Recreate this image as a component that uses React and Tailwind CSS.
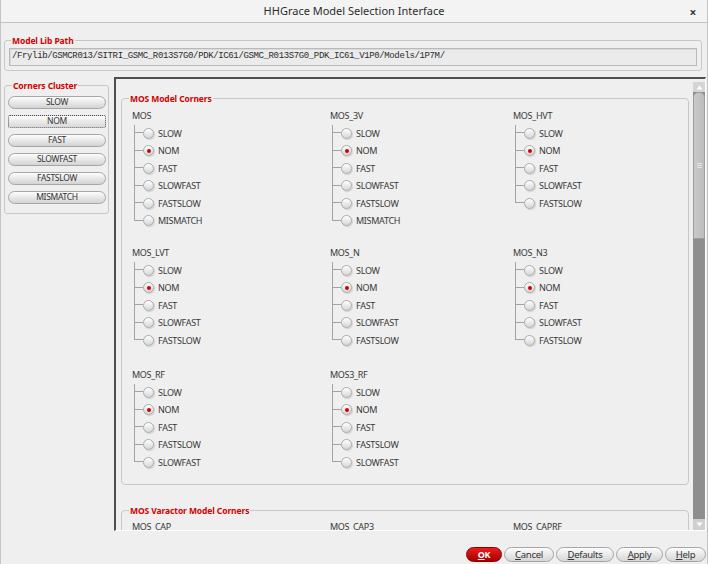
import React from 'react';

const RED = 'text-[#d20000]';

const mosGroups = [
  [
    { name: 'MOS', items: ['SLOW', 'NOM', 'FAST', 'SLOWFAST', 'FASTSLOW', 'MISMATCH'] },
    { name: 'MOS_3V', items: ['SLOW', 'NOM', 'FAST', 'SLOWFAST', 'FASTSLOW', 'MISMATCH'] },
    { name: 'MOS_HVT', items: ['SLOW', 'NOM', 'FAST', 'SLOWFAST', 'FASTSLOW'] },
  ],
  [
    { name: 'MOS_LVT', items: ['SLOW', 'NOM', 'FAST', 'SLOWFAST', 'FASTSLOW'] },
    { name: 'MOS_N', items: ['SLOW', 'NOM', 'FAST', 'SLOWFAST', 'FASTSLOW'] },
    { name: 'MOS_N3', items: ['SLOW', 'NOM', 'FAST', 'SLOWFAST', 'FASTSLOW'] },
  ],
  [
    { name: 'MOS_RF', items: ['SLOW', 'NOM', 'FAST', 'FASTSLOW', 'SLOWFAST'] },
    { name: 'MOS3_RF', items: ['SLOW', 'NOM', 'FAST', 'FASTSLOW', 'SLOWFAST'] },
    null,
  ],
];

const clusterButtons = ['SLOW', 'NOM', 'FAST', 'SLOWFAST', 'FASTSLOW', 'MISMATCH'];

// small radio indicator, red dot when selected
function Radio({ checked }) {
  return (
    <div className="w-[11px] h-[11px] shrink-0 rounded-full border border-[#ababab] bg-gradient-to-b from-white to-[#d6d6d6] shadow-[1px_1px_1px_rgba(0,0,0,0.12)] flex items-center justify-center">
      {checked && <div className="w-[4px] h-[4px] rounded-full bg-[#d40000]" />}
    </div>
  );
}

function TreeItem({ label, last }) {
  return (
    <div className="flex h-[17.5px] items-center">
      <div className="flex flex-col self-stretch w-[9px] ml-[2px]">
        <div className="h-1/2 border-l border-b border-[#a3a3a3]" />
        <div className={last ? 'h-1/2' : 'h-1/2 border-l border-[#a3a3a3]'} />
      </div>
      <Radio checked={label === 'NOM'} />
      <span className="ml-[4px] leading-none">{label}</span>
    </div>
  );
}

function CornerTree({ group }) {
  if (!group) return <div />;
  return (
    <div className="flex flex-col">
      <div className="h-[17.5px] flex items-center leading-none">{group.name}</div>
      {group.items.map((it, i) => (
        <TreeItem key={it} label={it} last={i === group.items.length - 1} />
      ))}
    </div>
  );
}

function Legend({ children, className = '' }) {
  return (
    <legend className={`px-[1px] text-[8.5px] font-bold leading-[11px] tracking-[-0.1px] ${RED} ${className}`}>
      {children}
    </legend>
  );
}

function PillButton({ children, className = '' }) {
  return (
    <button
      className={`h-[13px] rounded-full border border-[#a6a6a6] bg-gradient-to-b from-[#fdfdfd] to-[#d3d3d3] text-[8.5px] leading-none text-[#333] flex items-center justify-center ${className}`}
    >
      {children}
    </button>
  );
}

function DialogButton({ mnemonic, rest, width, primary }) {
  if (primary) {
    return (
      <button className={`${width} h-[15px] rounded-full border border-[#8a0000] bg-gradient-to-b from-[#ec1b1b] to-[#a80000] text-white font-bold text-[9px] leading-none flex items-center justify-center`}>
        <span className="underline">{mnemonic}</span>
        {rest}
      </button>
    );
  }
  return (
    <button className={`${width} h-[15px] rounded-full border border-[#a6a6a6] bg-gradient-to-b from-[#fdfdfd] to-[#d6d6d6] text-[#333] text-[9.5px] leading-none flex items-center justify-center`}>
      <span className="underline">{mnemonic}</span>
      {rest}
    </button>
  );
}

export default function App() {
  return (
    <div className="w-[708px] h-[564px] overflow-hidden bg-[#efefef] border-x border-[#c4c4c4] flex flex-col font-['Noto_Sans','DejaVu_Sans',sans-serif] text-[9px] tracking-[-0.3px] text-[#383838]">
      {/* title bar */}
      <div className="h-[23px] shrink-0 border-b border-[#c2c2c2] bg-[#f3f3f3] flex items-center relative">
        <div className="flex-1 text-center text-[11px] tracking-normal text-[#2e2e2e]">HHGrace Model Selection Interface</div>
        <div className="absolute right-[11px] top-[4px] text-[12px] font-bold text-[#333]">×</div>
      </div>

      {/* model lib path */}
      <fieldset className="mt-[12px] ml-[3px] mr-[5px] border border-[#c8c8c8] rounded-[3px] px-[4px] pb-[4px]">
        <Legend className="ml-[2px]">Model Lib Path</Legend>
        <div className="mt-[2px] h-[18px] border border-[#b9b9b9] bg-[#ebebeb] shadow-[inset_1px_1px_1px_rgba(0,0,0,0.08)] flex items-center pl-[2px] font-['Liberation_Mono',monospace] text-[9px] tracking-[-0.37px] text-[#2a2a2a]">
          /Frylib/GSMCR013/SITRI_GSMC_R013S7G0/PDK/IC61/GSMC_R013S7G0_PDK_IC61_V1P0/Models/1P7M/
        </div>
      </fieldset>

      {/* main area */}
      <div className="mt-[6px] h-[454px] shrink-0 flex">
        {/* corners cluster */}
        <div className="w-[113px] shrink-0">
          <fieldset className="mt-[3px] ml-[3px] w-[105px] border border-[#c8c8c8] rounded-[3px] pl-[3px] pr-[2px] pb-[9px]">
            <Legend className="ml-[4px]">Corners Cluster</Legend>
            <div className="mt-[5px] flex flex-col gap-[6px]">
              {clusterButtons.map((b) =>
                b === 'NOM' ? (
                  <button key={b} className="h-[13px] rounded-[2px] border border-dotted border-[#4a4a4a] bg-gradient-to-b from-[#fdfdfd] to-[#d8d8d8] text-[8.5px] leading-none text-[#333] flex items-center justify-center">
                    {b}
                  </button>
                ) : (
                  <PillButton key={b}>{b}</PillButton>
                )
              )}
            </div>
          </fieldset>
        </div>

        {/* scroll frame */}
        <div className="flex-1 mr-[1px] flex border-t-2 border-l-2 border-[#4f4f4f] border-b border-b-white border-r border-r-white">
          <div className="flex-1 overflow-hidden">
            <fieldset className="mt-[14px] ml-[5px] mr-[4px] border border-[#c8c8c8] rounded-[4px] pl-[10px] pb-[13px]">
              <Legend className="-ml-[3px]">MOS Model Corners</Legend>
              <div className="mt-[3px] grid grid-cols-[198px_183px_1fr] grid-rows-[137px_122px_auto]">
                {mosGroups.flat().map((g, i) => (
                  <CornerTree key={i} group={g} />
                ))}
              </div>
            </fieldset>

            <fieldset className="mt-[20px] ml-[5px] mr-[4px] border border-[#c8c8c8] rounded-[4px] pl-[10px] pb-[15px]">
              <Legend className="-ml-[3px]">MOS Varactor Model Corners</Legend>
              <div className="mt-[2px] grid grid-cols-[198px_183px_1fr]">
                <div className="h-[16px] flex items-center leading-none">MOS_CAP</div>
                <div className="h-[16px] flex items-center leading-none">MOS_CAP3</div>
                <div className="h-[16px] flex items-center leading-none">MOS_CAPRF</div>
              </div>
            </fieldset>
          </div>

          {/* scrollbar */}
          <div className="w-[12px] mt-[3px] shrink-0 flex flex-col bg-[#8e8e8e]">
            <div className="h-[10px] bg-[#d4d4d4] flex items-center justify-center">
              <svg width="7" height="5" viewBox="0 0 7 5"><path d="M3.5 0.5 L6.5 4.5 L0.5 4.5 Z" fill="#ffffff" /></svg>
            </div>
            <div className="h-[147px] rounded-t-[5px] border border-[#9d9d9d] bg-gradient-to-r from-[#c9c9c9] to-[#bdbdbd] flex items-center justify-center">
              <svg width="5" height="7" viewBox="0 0 5 7">
                <path d="M0 1.5 H5 M0 3.5 H5 M0 5.5 H5" stroke="#e6e6e6" strokeWidth="1" />
              </svg>
            </div>
            <div className="flex-1" />
            <div className="h-[11px] bg-[#cfcfcf] flex items-center justify-center">
              <svg width="7" height="5" viewBox="0 0 7 5"><path d="M0.5 0.5 L6.5 0.5 L3.5 4.5 Z" fill="#ffffff" /></svg>
            </div>
          </div>
        </div>
      </div>

      {/* dialog buttons */}
      <div className="flex-1 flex justify-end items-start pt-[16px] pr-[1px] gap-[2px]">
        <DialogButton primary mnemonic="O" rest="K" width="w-[36px]" />
        <DialogButton mnemonic="C" rest="ancel" width="w-[50px]" />
        <DialogButton mnemonic="D" rest="efaults" width="w-[58px]" />
        <DialogButton mnemonic="A" rest="pply" width="w-[47px]" />
        <DialogButton mnemonic="H" rest="elp" width="w-[41px]" />
      </div>
    </div>
  );
}
